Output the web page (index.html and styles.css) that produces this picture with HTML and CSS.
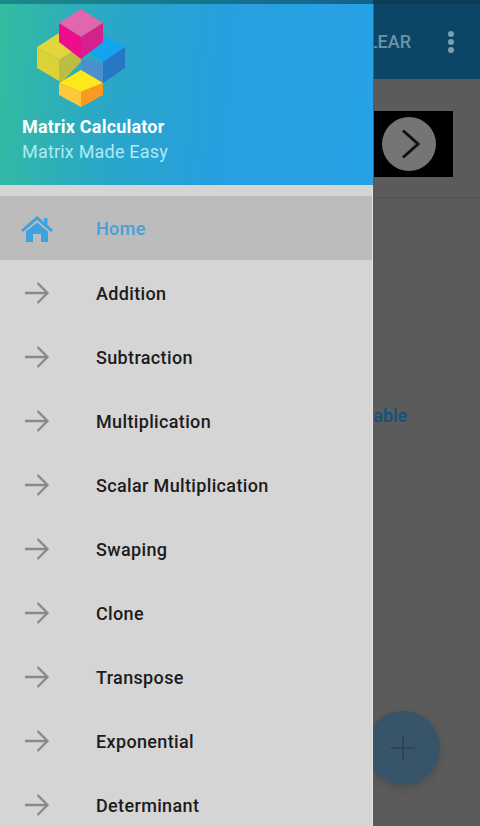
FILE: index.html
```html
<!DOCTYPE html>
<html lang="en">
<head>
    <meta charset="UTF-8">
    <title>Matrix Calculator</title>
    <link rel="stylesheet" href="styles.css">
</head>
<body>

<div class="app">
    <div class="status-bar"></div>
    <div class="toolbar">
        <span class="clear">CLEAR</span>
        <div class="more"><i></i><i></i><i></i></div>
    </div>
    <div class="ad-row">
        <div class="ad">
            <div class="ad-next">
                <svg width="24" height="34" viewBox="0 0 24 34"><path d="M6 3.5 L21 17 L6 30.5" fill="none" stroke="#111" stroke-width="3"/></svg>
            </div>
        </div>
    </div>
    <div class="table-link">Available</div>
</div>

<div class="fab">
    <svg width="24" height="24" viewBox="0 0 24 24"><path d="M12 0V24M0 12H24" stroke="#2c3e4c" stroke-width="1.4"/></svg>
</div>

<nav class="drawer">
    <div class="status-strip"></div>
    <header class="drawer-head">
        <svg class="logo" width="92" height="100" viewBox="36 8 92 100">
            <!-- yellow cube -->
            <path d="M37 47 L59 33 L81 47 L59 60Z" fill="#e2d63c"/>
            <path d="M37 47 L59 60 V81 L37 68Z" fill="#dcd233"/>
            <path d="M59 60 L81 47 V62 L62 82 L59 81Z" fill="#bcbd45"/>
            <!-- blue cube -->
            <path d="M81 47 L103 34 L125 47 L103 62Z" fill="#12a5ee"/>
            <path d="M82 60 L103 62 V83 L82 72Z" fill="#4a8fd0"/>
            <path d="M103 62 L125 47 V68 L103 83Z" fill="#2678c4"/>
            <!-- orange cube -->
            <path d="M59 83 L81 70 L103 83 L81 92Z" fill="#ffe81a"/>
            <path d="M59 83 L81 92 V107 L59 95Z" fill="#fdc93c"/>
            <path d="M81 92 L103 83 V95 L81 107Z" fill="#fb9a1e"/>
            <!-- pink cube -->
            <path d="M59 23 L81 9 L103 23 L81 37Z" fill="#e066ae"/>
            <path d="M59 23 L81 37 V59 L59 42Z" fill="#ee0d8c"/>
            <path d="M81 37 L103 23 V42 L81 59Z" fill="#d6208c"/>
        </svg>
        <div class="app-name">Matrix Calculator</div>
        <div class="app-tag">Matrix Made Easy</div>
    </header>
    <ul class="menu">
        <li class="menu-item active">
            <svg class="menu-icon" width="32" height="30" viewBox="0 0 32 30"><path d="M16 2 L23 8 V4 H26.5 V11 L32 16 L30 18 L16 6 L2 18 L0 16Z M5 17.5 L16 8.5 L27 17.5 V28 H20 V20 H12 V28 H5Z" fill="#3fa2e0"/></svg>
            Home
        </li>
        <li class="menu-item"><svg class="menu-icon" width="26" height="22" viewBox="0 0 26 22"><path d="M1 11H23M13.5 1 L23.5 11 L13.5 21" fill="none" stroke="#8a8a8a" stroke-width="2.3"/></svg>Addition</li>
        <li class="menu-item"><svg class="menu-icon" width="26" height="22" viewBox="0 0 26 22"><path d="M1 11H23M13.5 1 L23.5 11 L13.5 21" fill="none" stroke="#8a8a8a" stroke-width="2.3"/></svg>Subtraction</li>
        <li class="menu-item"><svg class="menu-icon" width="26" height="22" viewBox="0 0 26 22"><path d="M1 11H23M13.5 1 L23.5 11 L13.5 21" fill="none" stroke="#8a8a8a" stroke-width="2.3"/></svg>Multiplication</li>
        <li class="menu-item"><svg class="menu-icon" width="26" height="22" viewBox="0 0 26 22"><path d="M1 11H23M13.5 1 L23.5 11 L13.5 21" fill="none" stroke="#8a8a8a" stroke-width="2.3"/></svg>Scalar Multiplication</li>
        <li class="menu-item"><svg class="menu-icon" width="26" height="22" viewBox="0 0 26 22"><path d="M1 11H23M13.5 1 L23.5 11 L13.5 21" fill="none" stroke="#8a8a8a" stroke-width="2.3"/></svg>Swaping</li>
        <li class="menu-item"><svg class="menu-icon" width="26" height="22" viewBox="0 0 26 22"><path d="M1 11H23M13.5 1 L23.5 11 L13.5 21" fill="none" stroke="#8a8a8a" stroke-width="2.3"/></svg>Clone</li>
        <li class="menu-item"><svg class="menu-icon" width="26" height="22" viewBox="0 0 26 22"><path d="M1 11H23M13.5 1 L23.5 11 L13.5 21" fill="none" stroke="#8a8a8a" stroke-width="2.3"/></svg>Transpose</li>
        <li class="menu-item"><svg class="menu-icon" width="26" height="22" viewBox="0 0 26 22"><path d="M1 11H23M13.5 1 L23.5 11 L13.5 21" fill="none" stroke="#8a8a8a" stroke-width="2.3"/></svg>Exponential</li>
        <li class="menu-item"><svg class="menu-icon" width="26" height="22" viewBox="0 0 26 22"><path d="M1 11H23M13.5 1 L23.5 11 L13.5 21" fill="none" stroke="#8a8a8a" stroke-width="2.3"/></svg>Determinant</li>
    </ul>
</nav>

</body>
</html>
```

FILE: styles.css
```css
html, body {
    margin: 0;
    height: 826px;
    overflow: hidden;
}
body {
    position: relative;
    width: 480px;
    font-family: Roboto, sans-serif;
    background-color: #5b5b5b;
}

/* page behind the drawer */
.app {
    display: flex;
    flex-direction: column;
    padding-left: 374px;
    height: 100%;
    box-sizing: border-box;
}
.status-bar {
    height: 4px;
    margin-left: -374px;
    background-color: #0b3d57;
}
.toolbar {
    height: 75px;
    background-color: #0c4666;
    display: flex;
    align-items: center;
    justify-content: flex-end;
    padding-right: 26px;
    overflow: hidden;
}
.clear {
    color: #6d93a8;
    font-size: 18px;
    font-weight: 500;
    margin-right: 37px;
    margin-left: -20px;
    white-space: nowrap;
}
.more i {
    display: block;
    width: 6px;
    height: 6px;
    margin: 2px 0;
    border-radius: 50%;
    background-color: #7d9fb2;
}
.ad-row {
    height: 119px;
    box-sizing: border-box;
    padding-top: 32px;
    border-bottom: 1px solid #515151;
}
.ad {
    width: 79px;
    height: 66px;
    background-color: #000;
    display: flex;
    align-items: center;
    padding-left: 8px;
    box-sizing: border-box;
}
.ad-next {
    width: 54px;
    height: 54px;
    border-radius: 50%;
    background-color: #757575;
    display: flex;
    align-items: center;
    justify-content: center;
}
.table-link {
    margin: 207px 0 0 -40px;
    color: #0f5478;
    font-size: 18px;
    font-weight: 500;
}
.fab {
    position: absolute;
    left: 366px;
    top: 711px;
    width: 74px;
    height: 74px;
    border-radius: 50%;
    background-color: #385468;
    display: flex;
    align-items: center;
    justify-content: center;
    box-shadow: 0 3px 8px rgba(0, 0, 0, 0.15);
}

/* drawer */
.drawer {
    position: absolute;
    left: 0;
    top: 0;
    width: 373px;
    height: 826px;
    overflow: hidden;
    background-color: #d5d5d5;
}
.status-strip {
    height: 4px;
    background: linear-gradient(to right, #1b8a8c, #14628c);
}
.drawer-head {
    height: 181px;
    box-sizing: border-box;
    padding: 4px 0 0 22px;
    background: linear-gradient(95deg, #34bca0 0%, #2aa6c8 30%, #279fe0 60%, #27a2e6 100%);
}
.logo {
    display: block;
    margin-left: 14px;
}
.app-name {
    margin-top: 7px;
    color: #fff;
    font-size: 18px;
    font-weight: 700;
    line-height: 24px;
    letter-spacing: 0.2px;
}
.app-tag {
    margin-top: 1px;
    color: #aeeaf4;
    font-size: 18px;
    line-height: 24px;
    letter-spacing: 0.2px;
}
.menu {
    list-style: none;
    margin: 0;
    padding: 11px 0 0;
    border-right: 1px solid #e2e2e2;
}
.menu-item {
    position: relative;
    display: flex;
    align-items: center;
    height: 64px;
    padding-left: 96px;
    color: #1c1c1c;
    font-size: 18px;
    font-weight: 500;
    letter-spacing: 0.35px;
}
.menu-item.active {
    margin-bottom: 1px;
    background-color: #bcbcbc;
    color: #45a0d8;
}
.menu-icon {
    position: absolute;
    left: 24px;
    top: 21px;
}
.active .menu-icon {
    left: 21px;
    top: 18px;
}
```
